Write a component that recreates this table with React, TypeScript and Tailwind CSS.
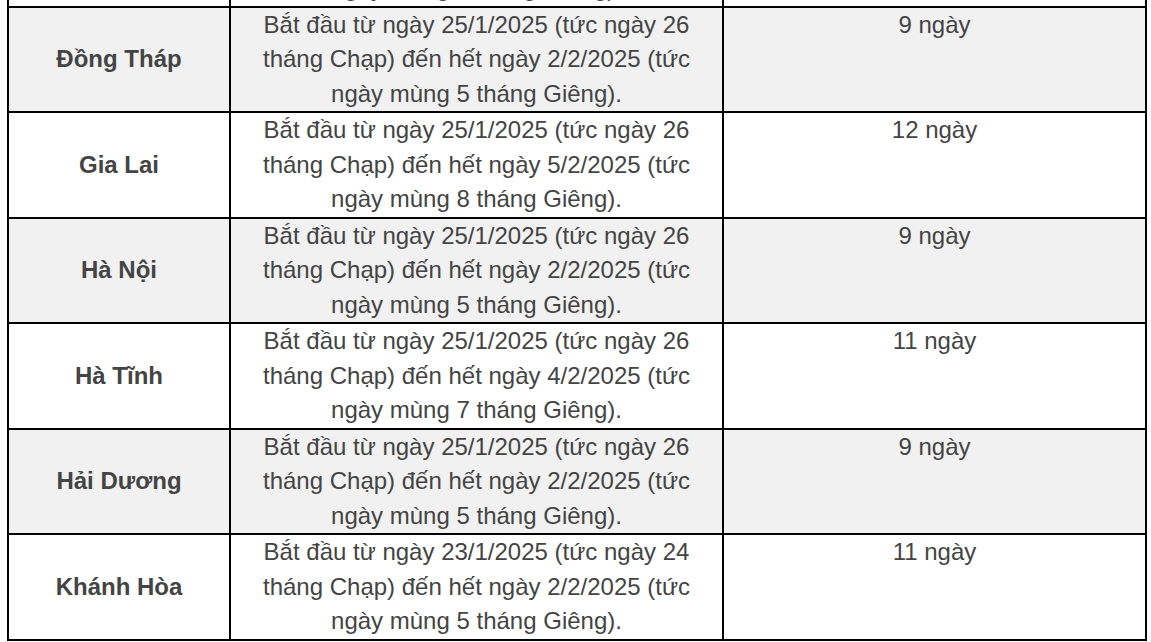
const rows = [
  { name: 'Bình Thuận', start: '25/1/2025', startLunar: '26', end: '2/2/2025', endLunar: '5', days: '9 ngày' },
  { name: 'Đồng Tháp', start: '25/1/2025', startLunar: '26', end: '2/2/2025', endLunar: '5', days: '9 ngày' },
  { name: 'Gia Lai', start: '25/1/2025', startLunar: '26', end: '5/2/2025', endLunar: '8', days: '12 ngày' },
  { name: 'Hà Nội', start: '25/1/2025', startLunar: '26', end: '2/2/2025', endLunar: '5', days: '9 ngày' },
  { name: 'Hà Tĩnh', start: '25/1/2025', startLunar: '26', end: '4/2/2025', endLunar: '7', days: '11 ngày' },
  { name: 'Hải Dương', start: '25/1/2025', startLunar: '26', end: '2/2/2025', endLunar: '5', days: '9 ngày' },
  { name: 'Khánh Hòa', start: '23/1/2025', startLunar: '24', end: '2/2/2025', endLunar: '5', days: '11 ngày' },
];

export default function App() {
  return (
    <div className="h-[642px] w-[1151px] overflow-hidden bg-white">
      <table
        className="ml-[7px] mt-[-100px] w-[1138px] table-fixed border-collapse text-[24px] leading-[34.5px] text-[#444]"
        style={{ fontFamily: '"Liberation Sans", Arial, sans-serif' }}
      >
        <colgroup>
          <col className="w-[222px]" />
          <col className="w-[493px]" />
          <col className="w-[423px]" />
        </colgroup>
        <tbody>
          {rows.map((r, i) => (
            <tr key={r.name} className={i % 2 === 1 ? 'bg-[#f1f1f1]' : 'bg-white'}>
              <td className="border-2 border-black p-0 text-center align-middle font-bold">{r.name}</td>
              <td className="border-2 border-black p-0 text-center align-top">
                Bắt đầu từ ngày {r.start} (tức ngày {r.startLunar}
                <br />
                tháng Chạp) đến hết ngày {r.end} (tức
                <br />
                ngày mùng {r.endLunar} tháng Giêng).
              </td>
              <td className="border-2 border-black p-0 text-center align-top">{r.days}</td>
            </tr>
          ))}
        </tbody>
      </table>
    </div>
  );
}
